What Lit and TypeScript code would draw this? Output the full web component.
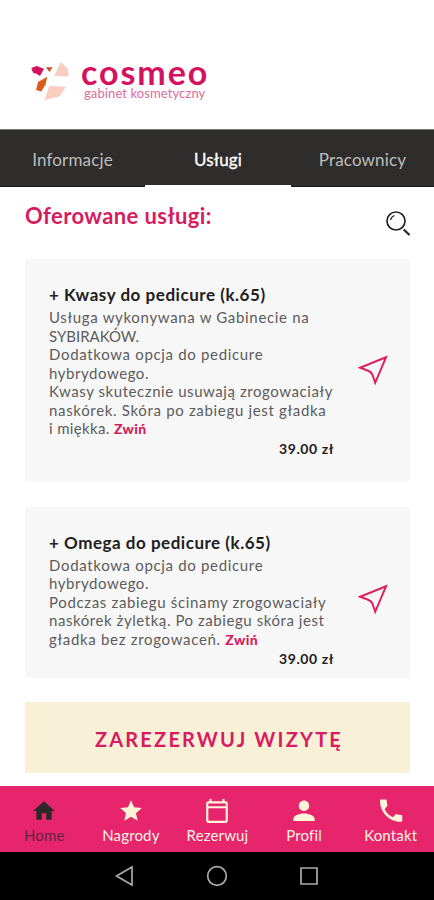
import { LitElement, html, css, svg } from "lit";
import { customElement, property } from "lit/decorators.js";

interface Line { text: string; spacing: number; }
interface Service { name: string; spacing: number; lines: Line[]; price: string; kind: string; }

const services: Service[] = [
  {
    name: "+ Kwasy do pedicure (k.65)", spacing: 0.54, kind: "tall", price: "39.00 zł",
    lines: [
      { text: "Usługa wykonywana w Gabinecie na", spacing: 0.67 },
      { text: "SYBIRAKÓW.", spacing: 0 },
      { text: "Dodatkowa opcja do pedicure", spacing: 0.67 },
      { text: "hybrydowego.", spacing: 0.55 },
      { text: "Kwasy skutecznie usuwają zrogowaciały", spacing: 0.57 },
      { text: "naskórek. Skóra po zabiegu jest gładka", spacing: 0.67 },
      { text: "i miękka.", spacing: 0.35 },
    ],
  },
  {
    name: "+ Omega do pedicure (k.65)", spacing: 0.52, kind: "short", price: "39.00 zł",
    lines: [
      { text: "Dodatkowa opcja do pedicure", spacing: 0.67 },
      { text: "hybrydowego.", spacing: 0.55 },
      { text: "Podczas zabiegu ścinamy zrogowaciały", spacing: 0.65 },
      { text: "naskórek żyletką. Po zabiegu skóra jest", spacing: 0.56 },
      { text: "gładka bez zrogowaceń.", spacing: 0.69 },
    ],
  },
];

const navItems = [
  { label: "Home", icon: svg`<path d="M10 20v-6h4v6h5v-8h3L12 3 2 12h3v8z"/>` },
  { label: "Nagrody", icon: svg`<path d="M12 17.27 18.18 21l-1.64-7.03L22 9.24l-7.19-.61L12 2 9.19 8.63 2 9.24l5.46 4.73L5.82 21z"/>` },
  { label: "Rezerwuj", icon: svg`<path d="M20 3h-1V1h-2v2H7V1H5v2H4c-1.1 0-2 .9-2 2v16c0 1.1.9 2 2 2h16c1.1 0 2-.9 2-2V5c0-1.1-.9-2-2-2zm0 18H4V9.500h16V21zm0-13.500H4V5h16v2.500z"/>` },
  { label: "Profil", icon: svg`<path d="M12 12c2.650 0 4.800-2.150 4.800-4.800S14.650 2.400 12 2.400 7.200 4.550 7.200 7.200 9.350 12 12 12zm0 2.200c-3.300 0-9.800 1.600-9.800 4.700v2.300h19.600v-2.300c0-3.100-6.500-4.700-9.800-4.700z"/>` },
  { label: "Kontakt", icon: svg`<path d="M6.100 10.300c1.600 3.200 4.300 5.800 7.500 7.500l2.500-2.500c.3-.3.750-.4 1.140-.28 1.260.42 2.620.64 4.010.64.630 0 1.140.51 1.140 1.140v4c0 .63-.51 1.140-1.140 1.140C10.500 21.940 1.800 13.200 1.800 2.500c0-.63.51-1.140 1.140-1.140h4c.63 0 1.140.51 1.140 1.140 0 1.400.22 2.750.64 4.010.12.39.03.82-.29 1.140z"/>` },
];

@customElement("service-card")
class ServiceCard extends LitElement {
  @property({ attribute: false }) service!: Service;

  static styles = css`
    :host { display: block; }
    .card { box-sizing: border-box; display: flex; border-radius: 4px; background: #f7f7f7; padding: 25px 22px 0 24px; }
    .tall { height: 223px; }
    .short { height: 171px; border-radius: 4px 4px 0 0; }
    .body { width: 285px; flex: none; }
    .name { font-size: 17px; font-weight: 700; line-height: 22px; height: 24px; color: #202020; white-space: nowrap; }
    .line { font-size: 15px; line-height: 18.5px; color: #5c5c5c; white-space: nowrap; }
    .short .line { line-height: 18.400px; }
    .toggle { font-size: 14px; font-weight: 900; letter-spacing: .4px; color: #d81b60; }
    .price { font-size: 14px; font-weight: 700; line-height: 20px; letter-spacing: .6px; color: #202020; text-align: right; }
    .short .price { line-height: 19px; }
    .arrow { width: 30px; height: 31px; margin-left: 24px; fill: none; stroke: #dc1f62; stroke-width: 2; flex: none; }
    .tall .arrow { margin-top: 71px; }
    .short .arrow { margin-top: 52px; }
  `;

  render() {
    const s = this.service;
    return html`<article class="card ${s.kind}">
      <div class="body">
        <div class="name" style="letter-spacing:${s.spacing}px">${s.name}</div>
        ${s.lines.map((l, i) => html`<div class="line" style="letter-spacing:${l.spacing}px">${l.text}${i === s.lines.length - 1 ? html` <span class="toggle">Zwiń</span>` : ""}</div>`)}
        <div class="price">${s.price}</div>
      </div>
      <svg class="arrow" viewBox="0 0 30 31"><path d="M28 2.300 2 12.700 9.500 15.500Q13.200 16.700 14.400 19.500L17.200 27.800Z"/></svg>
    </article>`;
  }
}

@customElement("app-root")
class AppRoot extends LitElement {
  static styles = css`
    :host { display: flex; flex-direction: column; width: 434px; height: 900px; overflow: hidden; background: #fff; font-family: Lato, "Liberation Sans", sans-serif; }
    .header { height: 129px; flex: none; box-sizing: border-box; padding: 57px 0 0 28px; display: flex; }
    .mark { width: 46px; height: 46px; flex: none; }
    .brand { padding-left: 7px; white-space: nowrap; }
    .brand-name { font-size: 34px; font-weight: 700; line-height: 30px; height: 30px; letter-spacing: 1.900px; color: #d5125f; }
    .brand-sub { padding-left: 3px; font-size: 13px; line-height: 13px; letter-spacing: .1px; color: #dc6c9a; }
    .tabs { height: 58px; flex: none; box-sizing: border-box; border-top: 1px solid #77777a; border-bottom: 1px solid #171615; display: grid; grid-template-columns: 145px 146px 143px; background: #2e2d2b; }
    .tab { text-align: center; font-size: 17px; line-height: 60px; color: #bdbdbb; box-sizing: border-box; height: 57px; letter-spacing: .15px; }
    .active { color: #fff; border-bottom: 2px solid #fff; -webkit-text-stroke: .3px #fff; }
    .heading { height: 72px; flex: none; box-sizing: border-box; padding: 14px 22px 0 25px; display: flex; justify-content: space-between; }
    .title { margin: 0; font-size: 22px; line-height: 30px; letter-spacing: .400px; font-weight: 700; color: #d81b60; }
    .search { width: 27px; height: 27px; margin-top: 9px; fill: none; stroke: #222; }
    .list { padding: 0 24px 0 25px; display: flex; flex-direction: column; gap: 25px; flex: none; }
    .book { flex: none; margin: 24px 24px 13px 25px; height: 71px; border: 0; padding: 3px 0 0 3px; background: #f9f0d8; color: #d81b60; font: 700 20px Lato, sans-serif; letter-spacing: 2.200px; }
    .nav { flex: none; height: 66px; display: flex; background: #e6256c; padding-left: 1px; box-sizing: border-box; }
    .item { flex: 1; display: flex; flex-direction: column; align-items: center; padding-top: 12px; color: #fff3e0; }
    .item svg { width: 26px; height: 26px; fill: #fff3d8; }
    .item span { font-size: 15px; line-height: 22px; letter-spacing: .15px; }
    .item.current { color: #652342; }
    .item.current svg { fill: #2c292b; }
    .system { flex: none; height: 48px; background: #000; display: flex; justify-content: center; gap: 68px; align-items: center; }
    .system svg { width: 24px; height: 24px; fill: none; stroke: #aaa; stroke-width: 1.700; }
  `;

  render() {
    return html`
      <header class="header">
        <svg class="mark" viewBox="0 0 46 46">
          <path fill="#d5125f" d="M3.300 11 8.700 9 16 11.700 12 19 9 17 5 15.700Z"/>
          <path fill="#cf4b1c" d="M18 10.300H24.700L21.300 15Z"/>
          <path fill="#f9cdbf" d="M32.700 5 40 11.700 40.700 19.500 26.300 19Z"/>
          <path fill="#dc5a1b" d="M19.300 19.700 17.500 27.500 13.300 34.500 8 33 10 25Z"/>
          <path fill="#f9cdbf" d="M21.300 29 38 29.700 31.500 39.500 16.500 43Z"/>
        </svg>
        <div class="brand"><div class="brand-name">cosmeo</div><div class="brand-sub">gabinet kosmetyczny</div></div>
      </header>
      <nav class="tabs"><div class="tab">Informacje</div><div class="tab active">Usługi</div><div class="tab">Pracownicy</div></nav>
      <div class="heading">
        <h1 class="title">Oferowane usługi:</h1>
        <svg class="search" viewBox="0 0 27 27"><circle cx="11" cy="11" r="9" stroke-width="1.700"/><path d="M5.500 10Q6.500 6.500 9.500 5.500" stroke-width="1.200"/><path d="m18.700 19.500 5.800 5.500" stroke-width="2.200"/></svg>
      </div>
      <main class="list">${services.map((s) => html`<service-card .service=${s}></service-card>`)}</main>
      <button class="book">ZAREZERWUJ WIZYTĘ</button>
      <nav class="nav">${navItems.map((n, i) => html`<div class="item ${i === 0 ? "current" : ""}"><svg viewBox="0 0 24 24">${n.icon}</svg><span>${n.label}</span></div>`)}</nav>
      <footer class="system">
        <svg viewBox="0 0 24 24"><path d="M19 3V21L3.500 12Z"/></svg>
        <svg viewBox="0 0 24 24"><circle cx="12" cy="12" r="9.300"/></svg>
        <svg viewBox="0 0 24 24"><path d="M4 4H20V20H4Z"/></svg>
      </footer>`;
  }
}
